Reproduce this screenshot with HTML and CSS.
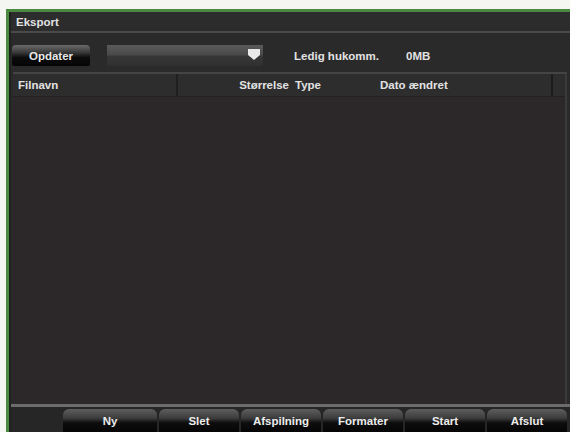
FILE: index.html
```html
<!DOCTYPE html>
<html>
<head>
<meta charset="utf-8">
<link rel="stylesheet" href="styles.css">
</head>
<body>
<div class="frame">
  <div class="panel">
    <div class="titlebar">Eksport</div>
    <div class="toolbar">
      <div class="btn refresh">Opdater</div>
      <div class="select"><span class="arrow"></span></div>
      <div class="label mem">Ledig hukomm.</div>
      <div class="label val">0MB</div>
    </div>
    <div class="table">
      <div class="thead">
        <div class="th name">Filnavn</div>
        <div class="th size">Størrelse</div>
        <div class="th type">Type</div>
        <div class="th date">Dato ændret</div>
        <div class="th tail"></div>
      </div>
      <div class="tbody"></div>
    </div>
    <div class="footer">
      <div class="fbtn ny">Ny</div>
      <div class="fbtn">Slet</div>
      <div class="fbtn">Afspilning</div>
      <div class="fbtn">Formater</div>
      <div class="fbtn">Start</div>
      <div class="fbtn">Afslut</div>
    </div>
  </div>
</div>
</body>
</html>
```
FILE: styles.css
```css
html, body {
  margin: 0;
  padding: 0;
  background: #f3f6f1;
  width: 570px;
  height: 432px;
  overflow: hidden;
  font-family: "Liberation Sans", Arial, sans-serif;
  font-weight: bold;
  font-size: 11.5px;
  color: #e2e2e2;
}
.frame {
  margin: 9px 0 0 6px;
  width: 564px;
  height: 423px;
  border-top: 3px solid #4a8a40;
  border-left: 3px solid #4a8a40;
  box-sizing: border-box;
  background: #2a2a2a;
}
.panel {
  display: flex;
  flex-direction: column;
  height: 100%;
  border-left: 2px solid #1d221c;
  box-sizing: border-box;
}
.titlebar {
  height: 21px;
  line-height: 20px;
  padding-left: 5px;
  border-bottom: 2px solid #4a4a4a;
  background: #2c2c2c;
  box-sizing: border-box;
}
.toolbar {
  height: 39px;
  display: flex;
  align-items: center;
  padding-top: 5px;
  box-sizing: border-box;
}
.btn.refresh {
  width: 78px;
  height: 21px;
  margin-left: 1px;
  border-radius: 4px 4px 2px 2px;
  background: linear-gradient(#6a6a6a 0%, #3a3a3a 35%, #0b0b0b 60%, #050505 100%);
  text-align: center;
  line-height: 22px;
  color: #e8e8e8;
}
.select {
  margin-left: 17px;
  width: 156px;
  height: 21px;
  background: linear-gradient(#5a5a5a 0%, #4a4a4a 45%, #363636 55%, #303030 100%);
  position: relative;
}
.arrow {
  position: absolute;
  right: 3px;
  top: 4px;
  width: 12px;
  height: 6px;
  background: #e8e8e8;
}
.arrow::after {
  content: "";
  position: absolute;
  left: 0;
  top: 6px;
  border-left: 6px solid transparent;
  border-right: 6px solid transparent;
  border-top: 5px solid #e8e8e8;
}
.label.mem {
  margin-left: 31px;
  padding-top: 2px;
}
.label.val {
  margin-left: 27px;
  padding-top: 2px;
}
.table {
  flex: 1;
  display: flex;
  flex-direction: column;
  margin: 0 3px 0 2px;
  border-top: 2px solid #444;
  border-right: 2px solid #3a3a3a;
}
.thead {
  height: 22px;
  display: flex;
  background: #2d2d2d;
  border-bottom: 1px solid #222;
  line-height: 22px;
}
.th {
  box-sizing: border-box;
}
.th.name {
  width: 165px;
  padding-left: 5px;
  border-right: 2px solid #1f1f1f;
}
.th.size {
  width: 111px;
  text-align: right;
}
.th.type {
  width: 91px;
  padding-left: 6px;
}
.th.date {
  width: 173px;
  border-right: 2px solid #1c1c1c;
}
.th.tail {
  flex: 1;
}
.tbody {
  flex: 1;
  background: #2c2728;
}
.footer {
  height: 28px;
  display: flex;
  align-items: flex-end;
  border-top: 3px solid #6c6c6c;
  box-sizing: border-box;
  background: #262626;
  padding-left: 52px;
  gap: 2px;
}
.fbtn {
  width: 80px;
  height: 23px;
  border-radius: 6px 6px 0 0;
  background: linear-gradient(#5e5e5e 0%, #3c3c3c 40%, #0d0d0d 60%, #050505 100%);
  text-align: center;
  line-height: 24px;
  color: #ececec;
}
.fbtn.ny {
  width: 94px;
}
```
